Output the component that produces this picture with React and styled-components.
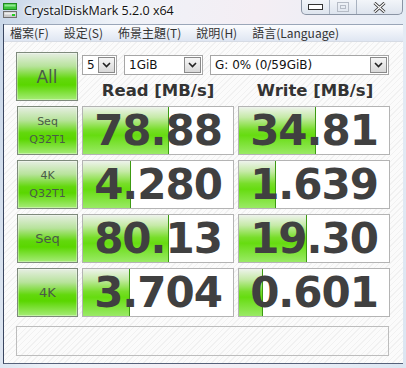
import React from "react";
import styled, { createGlobalStyle } from "styled-components";

const GlobalStyle = createGlobalStyle`
  html, body {
    margin: 0;
    padding: 0;
    width: 406px;
    height: 368px;
    overflow: hidden;
  }
  * { box-sizing: border-box; }
`;

const Window = styled.div`
  width: 406px;
  height: 368px;
  display: flex;
  flex-direction: column;
  background: linear-gradient(100deg, #c8d6e8 0%, #eef2f8 25%, #f4eef4 55%, #e9eef6 80%, #dbe6f2 100%);
  font-family: "Noto Sans", "DejaVu Sans", sans-serif;
`;

const TitleBar = styled.div`
  height: 24px;
  display: flex;
  align-items: flex-start;
  padding-left: 3px;
`;

const AppIcon = styled.svg`
  margin-top: 3px;
  flex: none;
`;

const Title = styled.div`
  margin-left: 7px;
  margin-top: 2px;
  font-family: "Open Sans", "Noto Sans", sans-serif;
  font-size: 12.5px;
  color: #111;
  text-shadow: 0 0 6px #fff, 0 0 3px #fff;
  flex: 1;
`;

const Caption = styled.div`
  display: flex;
  height: 15px;
  margin-right: 3px;
  border: 1px solid #8a94a4;
  border-top: none;
  border-radius: 0 0 5px 5px;
  overflow: hidden;
  background: linear-gradient(#f2f5f9, #dde4ee);
`;

const CapBtn = styled.div`
  width: ${(p) => p.$w}px;
  display: flex;
  align-items: center;
  justify-content: center;
  border-left: ${(p) => (p.$first ? "none" : "1px solid #a8b2c0")};
  color: ${(p) => (p.$dim ? "#b6bcc6" : "#333")};
`;

const Frame = styled.div`
  flex: 1;
  margin: 0 3px 4px 3px;
  display: flex;
  flex-direction: column;
  border-left: 1px solid #3a4660;
  border-bottom: 1px solid #56627a;
`;

const MenuBar = styled.div`
  height: 18px;
  display: flex;
  align-items: center;
  padding-left: 0;
  background: linear-gradient(#fbfcfe, #dfe6f2);
  border-top: 1px solid #9aa6b8;
  border-bottom: 1px solid #d6dbe4;
  font-family: "Noto Sans CJK TC", "Noto Sans", sans-serif;
  font-size: 12px;
  color: #333;
`;

const MenuItem = styled.span`
  padding: 0 7px 0 ${(p) => (p.$first ? 6 : 8)}px;
  line-height: 16px;
`;

const Client = styled.div`
  flex: 1;
  padding: 10px 13px 0 12px;
  background: repeating-linear-gradient(
    -45deg,
    #fbfbfb 0px,
    #fbfbfb 3px,
    #f1f1f1 3px,
    #f1f1f1 4px
  );
  display: flex;
  flex-direction: column;
`;

const Grid = styled.div`
  display: grid;
  grid-template-columns: 62px 152px 152px;
  column-gap: 4px;
  row-gap: 5px;
  grid-template-rows: 49px repeat(4, 49px);
  & > *:nth-child(3n) {
    margin-left: 1px;
  }
`;

const Head = styled.div`
  grid-column: 2 / span 2;
  display: flex;
  flex-direction: column;
`;

const ComboRow = styled.div`
  display: flex;
  gap: 7px;
  margin-top: 3px;
`;

const Combo = styled.div`
  width: ${(p) => p.$w}px;
  height: 20px;
  background: #fff;
  border: 1px solid #a6a6a6;
  display: flex;
  align-items: center;
  padding: 1px;
  font-family: "DejaVu Sans", sans-serif;
  font-size: 12px;
  color: #111;
`;

const ComboText = styled.span`
  flex: 1;
  padding-left: 3px;
`;

const Arrow = styled.div`
  width: 17px;
  height: 16px;
  border: 1px solid #8a8a8a;
  background: linear-gradient(#f6f6f6, #d8d8d8);
  display: flex;
  align-items: center;
  justify-content: center;
`;

const Labels = styled.div`
  display: grid;
  grid-template-columns: 152px 152px;
  column-gap: 5px;
  margin-top: 7px;
`;

const Label = styled.div`
  text-align: center;
  font-family: "DejaVu Sans", sans-serif;
  font-weight: bold;
  font-size: 16.5px;
  color: #333;
  line-height: 18px;
`;

const TestButton = styled.div`
  border: 1px solid #7e8a7c;
  background: linear-gradient(#e6eee2 0%, #b8e39c 28%, #62d80c 55%, #5ad600 68%, #a6ec78 100%);
  box-shadow: inset 0 0 0 1px rgba(255, 255, 255, 0.35);
  display: flex;
  flex-direction: column;
  align-items: center;
  justify-content: center;
  font-family: "DejaVu Sans", sans-serif;
  font-size: ${(p) => p.$size}px;
  line-height: ${(p) => p.$size + 7}px;
  color: #4a5a48;
`;

const ValueBox = styled.div`
  position: relative;
  background: #fff;
  border: 1px solid #b4b4b4;
  display: flex;
  align-items: center;
  justify-content: flex-end;
  padding-right: 11px;
  overflow: hidden;
`;

const Fill = styled.div`
  position: absolute;
  left: 0;
  top: 0;
  bottom: 0;
  background: linear-gradient(#eef3ec 0%, #c6eaa8 22%, #78de2a 48%, #66dc10 60%, #9aea66 100%);
  border-right: 1px solid #3c9a12;
`;

const Value = styled.span`
  position: relative;
  font-family: "DejaVu Sans", sans-serif;
  font-weight: bold;
  font-size: 42px;
  letter-spacing: -1px;
  color: #404040;
  line-height: 1;
  margin-top: 1px;
`;

const Message = styled.div`
  margin-top: 9px;
  width: 373px;
  height: 30px;
  border: 1px solid #bdbdbd;
  background: transparent;
`;

const rows = [
  { label: ["Seq", "Q32T1"], size: 11, read: "78.88", rw: 86, write: "34.81", ww: 77 },
  { label: ["4K", "Q32T1"], size: 11, read: "4.280", rw: 48, write: "1.639", ww: 37 },
  { label: ["Seq"], size: 13, read: "80.13", rw: 86, write: "19.30", ww: 68 },
  { label: ["4K"], size: 13, read: "3.704", rw: 47, write: "0.601", ww: 24 },
];

const Chevron = () => (
  <svg width="9" height="6" viewBox="0 0 9 6">
    <path d="M1 1 L4.5 4.5 L8 1" fill="none" stroke="#222" strokeWidth="1.6" />
  </svg>
);

const DriveIcon = () => (
  <AppIcon width="14" height="15" viewBox="0 0 14 15">
    <rect x="0.5" y="0.5" width="13" height="6" fill="#3cc43c" stroke="#1f8a1f" />
    <rect x="1.5" y="1.5" width="11" height="2" fill="#8fe88f" />
    <rect x="0.5" y="8.5" width="13" height="6" fill="#c9c9c9" stroke="#707070" />
    <rect x="1.5" y="9.5" width="11" height="2" fill="#eeeeee" />
    <rect x="9" y="11" width="3" height="2" fill="#22cc22" />
  </AppIcon>
);

export default function App() {
  return (
    <Window>
      <GlobalStyle />
      <TitleBar>
        <DriveIcon />
        <Title>CrystalDiskMark 5.2.0 x64</Title>
        <Caption>
          <CapBtn $w={27} $first>
            <svg width="15" height="6" viewBox="0 0 15 6">
              <rect x="0.5" y="0.5" width="14" height="5" fill="#fff" stroke="#333" />
            </svg>
          </CapBtn>
          <CapBtn $w={27} $dim>
            <svg width="12" height="10" viewBox="0 0 12 10">
              <rect x="0.5" y="0.5" width="11" height="9" fill="none" stroke="#b6bcc6" />
              <rect x="3.5" y="3.5" width="5" height="3" fill="none" stroke="#b6bcc6" />
            </svg>
          </CapBtn>
          <CapBtn $w={46}>
            <svg width="13" height="11" viewBox="0 0 13 11">
              <path d="M1.5 1 L11.5 10 M11.5 1 L1.5 10" stroke="#333" strokeWidth="3" />
              <path d="M1.5 1 L11.5 10 M11.5 1 L1.5 10" stroke="#fff" strokeWidth="1.2" />
            </svg>
          </CapBtn>
        </Caption>
      </TitleBar>
      <Frame>
        <MenuBar>
          <MenuItem $first>檔案(F)</MenuItem>
          <MenuItem>設定(S)</MenuItem>
          <MenuItem>佈景主題(T)</MenuItem>
          <MenuItem>說明(H)</MenuItem>
          <MenuItem>語言(Language)</MenuItem>
        </MenuBar>
        <Client>
          <Grid>
            <TestButton $size={17}>All</TestButton>
            <Head>
              <ComboRow>
                <Combo $w={35}>
                  <ComboText>5</ComboText>
                  <Arrow><Chevron /></Arrow>
                </Combo>
                <Combo $w={79}>
                  <ComboText>1GiB</ComboText>
                  <Arrow><Chevron /></Arrow>
                </Combo>
                <Combo $w={179}>
                  <ComboText>G: 0% (0/59GiB)</ComboText>
                  <Arrow><Chevron /></Arrow>
                </Combo>
              </ComboRow>
              <Labels>
                <Label>Read [MB/s]</Label>
                <Label>Write [MB/s]</Label>
              </Labels>
            </Head>
            {rows.map((r) => (
              <React.Fragment key={r.label.join("")}>
                <TestButton $size={r.size}>
                  {r.label.map((l) => (
                    <span key={l}>{l}</span>
                  ))}
                </TestButton>
                <ValueBox>
                  <Fill style={{ width: r.rw }} />
                  <Value>{r.read}</Value>
                </ValueBox>
                <ValueBox>
                  <Fill style={{ width: r.ww }} />
                  <Value>{r.write}</Value>
                </ValueBox>
              </React.Fragment>
            ))}
          </Grid>
          <Message />
        </Client>
      </Frame>
    </Window>
  );
}
